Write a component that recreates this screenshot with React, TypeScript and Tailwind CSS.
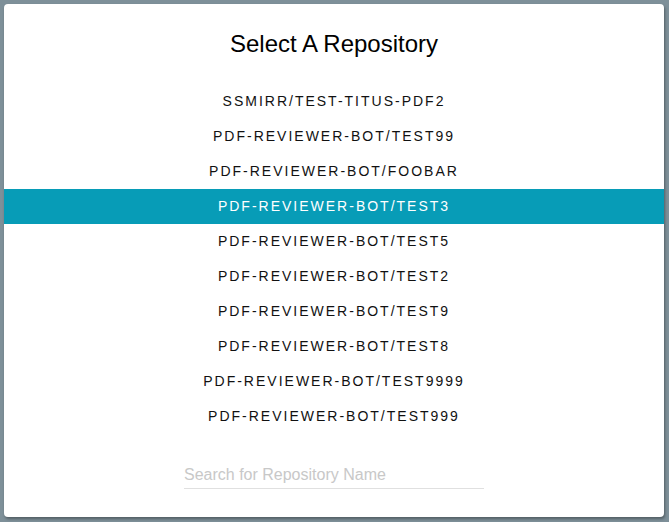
const repos = [
  'ssmirr/test-titus-pdf2',
  'pdf-reviewer-bot/test99',
  'pdf-reviewer-bot/foobar',
  'pdf-reviewer-bot/test3',
  'pdf-reviewer-bot/test5',
  'pdf-reviewer-bot/test2',
  'pdf-reviewer-bot/test9',
  'pdf-reviewer-bot/test8',
  'pdf-reviewer-bot/test9999',
  'pdf-reviewer-bot/test999',
]

export default function App() {
  const selected = 'pdf-reviewer-bot/test3'

  return (
    <div className="h-[522px] w-[669px] bg-[#7e9099] pl-1 pt-1 font-['Liberation_Sans',Arial,sans-serif]">
      <div className="flex h-[513px] w-[660px] flex-col items-center rounded-sm bg-white shadow-[1px_2px_3px_rgba(0,0,0,0.35)]">
        <h1 className="mt-[26px] text-[24px] leading-[28px] text-black">Select A Repository</h1>

        <ul className="mt-[26px] w-full">
          {repos.map((repo) => (
            <li
              key={repo}
              className={
                repo === selected
                  ? 'flex h-[35px] items-center justify-center bg-[#079cb7] text-[14px] uppercase tracking-[2px] text-white'
                  : 'flex h-[35px] items-center justify-center text-[14px] uppercase tracking-[2px] text-[#111]'
              }
            >
              {repo}
            </li>
          ))}
        </ul>

        <input
          type="text"
          placeholder="Search for Repository Name"
          className="mt-[31px] w-[300px] border-b border-[#e0e0e0] pb-[3px] text-[16px] leading-[20px] outline-none placeholder:text-[#c8c8c8]"
        />
      </div>
    </div>
  )
}
